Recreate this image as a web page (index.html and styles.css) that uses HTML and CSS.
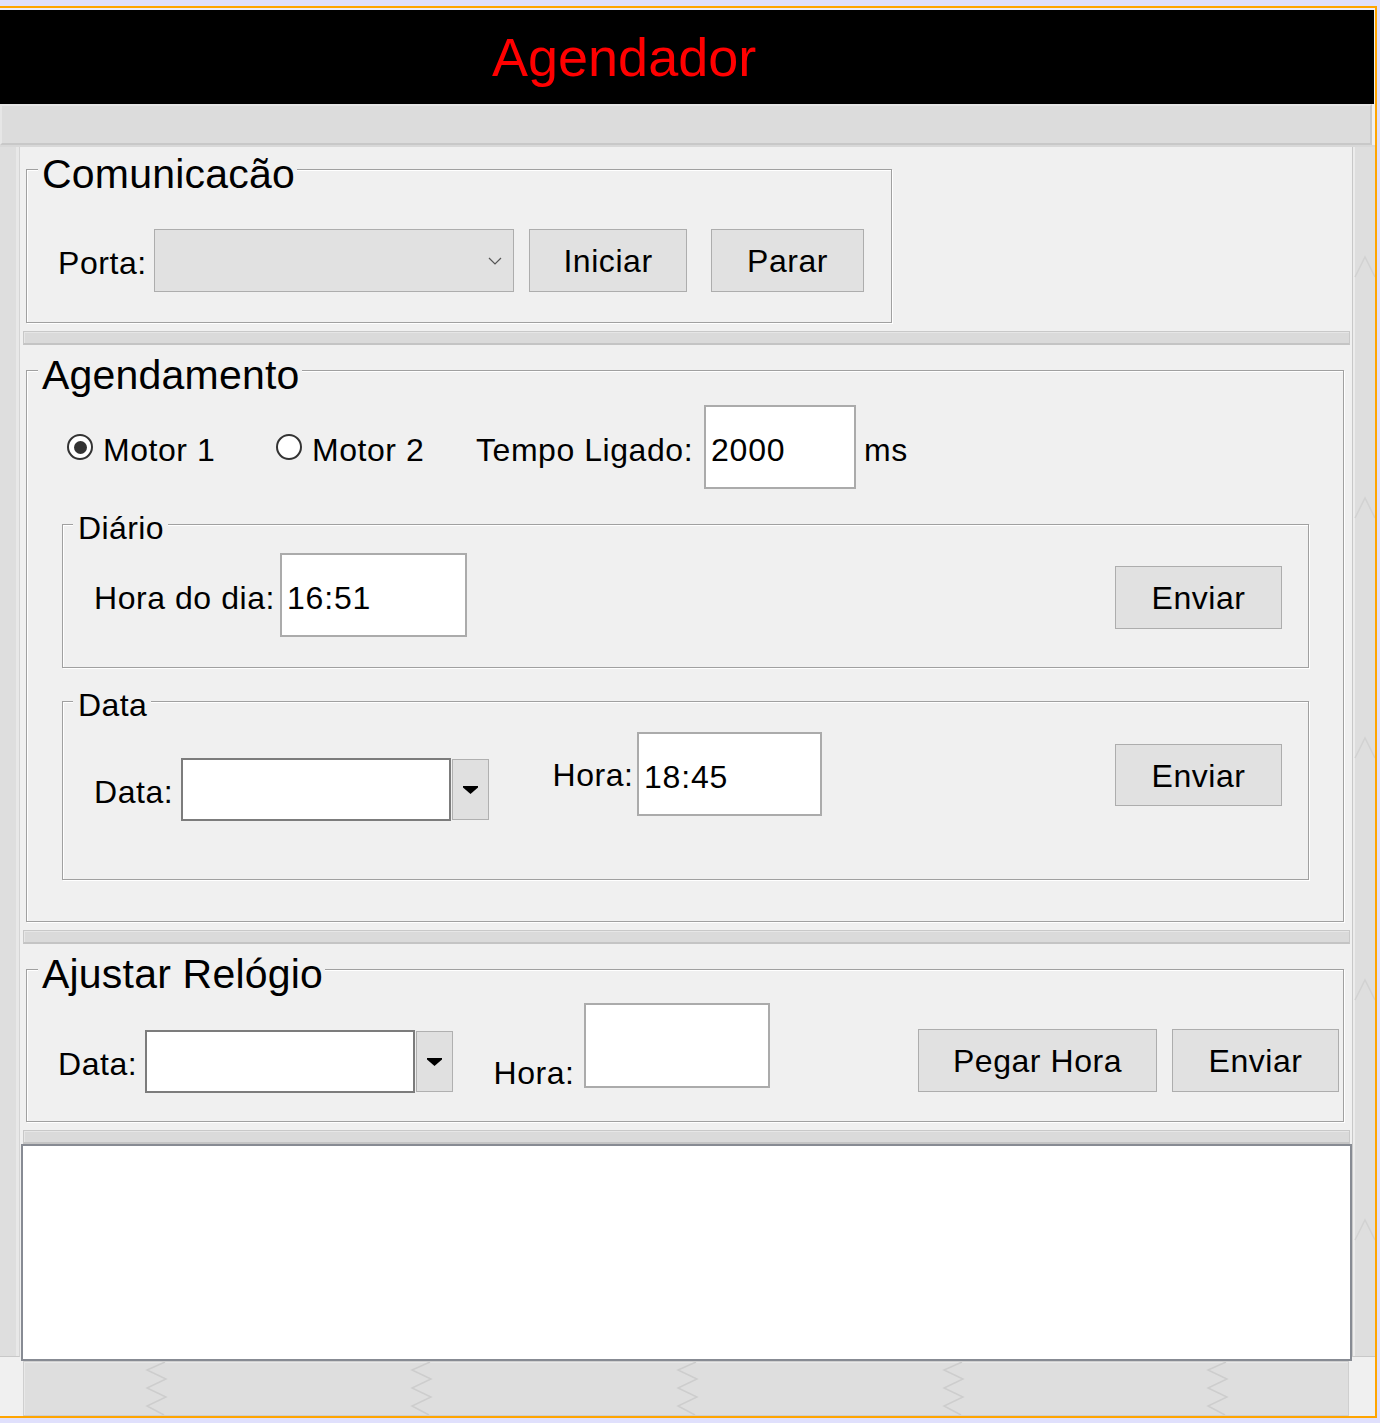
FILE: index.html
```html
<!DOCTYPE html>
<html lang="pt">
<head>
<meta charset="utf-8">
<title>Agendador</title>
<link rel="stylesheet" href="styles.css">
</head>
<body>
<div class="frame">
  <div class="topline"></div>
  <header class="header"><h1 class="app-title">Agendador</h1></header>
  <div class="toolbar"></div>
  <div class="toolbar-gap"></div>
  <div class="main">
    <div class="side side-left"></div>
    <div class="center">
      <section class="pane pane-com">
        <div class="group group-com">
          <div class="group-title">Comunicacão</div>
          <div class="row row-com">
            <span class="label label-porta">Porta:</span>
            <div class="combo"><svg class="combo-chev" width="14" height="8" viewBox="0 0 14 8"><polyline points="1,1 7,7 13,1" fill="none" stroke="#555" stroke-width="1.2"/></svg></div>
            <div class="btn btn-iniciar">Iniciar</div>
            <div class="btn btn-parar">Parar</div>
          </div>
        </div>
      </section>
      <div class="divider"></div>
      <section class="pane pane-ag">
        <div class="group group-ag">
          <div class="group-title">Agendamento</div>
          <div class="row row-motor">
            <span class="radio checked"></span><span class="label radio-label rl1">Motor 1</span>
            <span class="radio radio2"></span><span class="label radio-label rl2">Motor 2</span>
            <span class="label tempo">Tempo Ligado:</span>
            <div class="field field-tempo">2000</div>
            <span class="label ms">ms</span>
          </div>
          <div class="subgroup sg-diario">
            <div class="sub-title">Diário</div>
            <div class="row row-diario">
              <span class="label label-hd">Hora do dia:</span>
              <div class="field field-hd">16:51</div>
              <div class="btn btn-enviar">Enviar</div>
            </div>
          </div>
          <div class="subgroup sg-data">
            <div class="sub-title">Data</div>
            <div class="row row-data">
              <div class="datepick dp-ag">
                <span class="label dp-label">Data:</span>
                <div class="datefield"></div>
                <div class="dropbtn"><svg width="15" height="8" viewBox="0 0 15 8"><path d="M0 0H15V1.5L7.5 8L0 1.5Z" fill="#000"/></svg></div>
              </div>
              <span class="label hora-ag">Hora:</span>
              <div class="field field-hora">18:45</div>
              <div class="btn btn-enviar btn-enviar-data">Enviar</div>
            </div>
          </div>
        </div>
      </section>
      <div class="divider"></div>
      <section class="pane pane-rel">
        <div class="group group-rel">
          <div class="group-title">Ajustar Relógio</div>
          <div class="row row-rel">
            <div class="datepick dp-rel">
              <span class="label dp-label">Data:</span>
              <div class="datefield"></div>
              <div class="dropbtn"><svg width="15" height="8" viewBox="0 0 15 8"><path d="M0 0H15V1.5L7.5 8L0 1.5Z" fill="#000"/></svg></div>
            </div>
            <span class="label hora-rel">Hora:</span>
            <div class="field field-hora-rel"></div>
            <div class="btn btn-pegar">Pegar Hora</div>
            <div class="btn btn-enviar-rel">Enviar</div>
          </div>
        </div>
      </section>
      <div class="divider"></div>
      <div class="textarea"></div>
      <div class="bottom-strip">
        <svg width="1326" height="55" viewBox="0 0 1326 55">
          <g fill="none" stroke="#cdcdcd" stroke-width="1.5">
            <polyline points="142,1 124,9 143,18 124,27 143,36 124,45 141,54"/>
            <polyline points="407,1 389,9 408,18 389,27 408,36 389,45 406,54"/>
            <polyline points="673,1 655,9 674,18 655,27 674,36 655,45 672,54"/>
            <polyline points="939,1 921,9 940,18 921,27 940,36 921,45 938,54"/>
            <polyline points="1203,1 1185,9 1204,18 1185,27 1204,36 1185,45 1202,54"/>
          </g>
        </svg>
      </div>
    </div>
    <div class="side side-right">
      <svg width="23" height="1210" viewBox="0 0 23 1210">
        <g fill="none" stroke="#d2d2d2" stroke-width="1.5">
          <polyline points="3,130 13,110 23,130"/>
          <polyline points="3,371 13,351 23,371"/>
          <polyline points="3,611 13,591 23,611"/>
          <polyline points="3,853 13,833 23,853"/>
          <polyline points="3,1093 13,1073 23,1093"/>
        </g>
      </svg>
    </div>
  </div>
</div>
</body>
</html>
```

FILE: styles.css
```css
html, body {
  margin: 0;
  padding: 0;
}
body {
  background: #e0e0fc;
  font-family: "Liberation Sans", Arial, sans-serif;
  color: #000;
  height: 1423px;
  overflow: hidden;
}
.frame {
  margin-top: 6px;
  width: 1375px;
  border-top: 2px solid #ffa500;
  border-right: 2px solid #ffa500;
  border-bottom: 2px solid #ffa500;
  background: #f0f0f0;
}
.topline {
  height: 2px;
  background: #ececfa;
}
.header {
  height: 94px;
  background: #000;
  margin-right: 1px;
}
.app-title {
  margin: 0;
  padding-left: 492px;
  font-size: 54px;
  line-height: 94px;
  font-weight: normal;
  color: #ff0000;
}
.toolbar {
  height: 41px;
  margin-right: 3px;
  box-sizing: border-box;
  background: #dcdcdc;
  border-top: 2px solid #e6e6e6;
  border-left: 2px solid #e6e6e6;
  border-bottom: 2px solid #c8c8c8;
  border-right: 2px solid #c8c8c8;
}
.toolbar-gap {
  height: 2px;
  background: #d8d8d8;
}
.main {
  display: flex;
  height: 1269px;
}
.side {
  flex-shrink: 0;
  height: 1210px;
  box-sizing: border-box;
  background: #dedede;
}
.side-left {
  width: 20px;
  border-right: 1px solid #d4d4d4;
  border-bottom: 1px solid #c8c8c8;
  box-shadow: inset -3px 0 0 #e8e8e8;
}
.side-right {
  width: 23px;
  border-left: 1px solid #c8c8c8;
  border-bottom: 1px solid #c8c8c8;
  box-shadow: inset 2px 0 0 #ececec;
  overflow: hidden;
}
.side-right svg {
  display: block;
  margin-left: -1px;
}
.center {
  width: 1332px;
  flex-shrink: 0;
  display: flex;
  flex-direction: column;
}
.pane {
  flex-shrink: 0;
}
.pane-com { height: 184px; }
.pane-ag { height: 585px; }
.pane-rel { height: 186px; }

.divider {
  flex-shrink: 0;
  height: 14px;
  margin: 0 2px 0 3px;
  box-sizing: border-box;
  background: #dadada;
  border: 1px solid #c8c8c8;
  border-bottom: 2px solid #c4c4c4;
  box-shadow: inset 1px 1px 0 #e6e6e6;
}

/* etched titled groups */
.group, .subgroup {
  box-sizing: border-box;
  border: 1px solid #a0a0a0;
  box-shadow: inset 1px 1px 0 #fff, 1px 1px 0 #fff;
}
.group {
  margin-left: 6px;
  margin-top: 25px;
}
.group-com {
  margin-top: 22px;
  width: 866px;
  height: 154px;
}
.group-ag {
  width: 1318px;
  height: 552px;
}
.group-rel {
  width: 1318px;
  height: 153px;
}
.group-title {
  width: fit-content;
  margin: -19px 0 0 11px;
  padding: 0 2px 0 4px;
  background: #f0f0f0;
  font-size: 41px;
  line-height: 46px;
  letter-spacing: 0.2px;
  white-space: nowrap;
}
.subgroup {
  margin-left: 35px;
  width: 1247px;
}
.sg-diario {
  margin-top: 35px;
  height: 144px;
}
.sg-data {
  margin-top: 33px;
  height: 179px;
}
.sub-title {
  width: fit-content;
  margin: -15px 0 0 10px;
  padding: 0 4px 0 5px;
  background: #f0f0f0;
  font-size: 32px;
  line-height: 37px;
  letter-spacing: 0.4px;
  white-space: nowrap;
}

/* rows */
.row {
  display: flex;
}
.row-com {
  align-items: center;
  height: 63px;
  margin-top: 32px;
}
.row-motor {
  align-items: center;
  height: 84px;
  margin-top: 7px;
}
.row-diario {
  align-items: center;
  height: 84px;
  margin-top: 6px;
}
.row-data {
  align-items: flex-start;
  height: 84px;
  margin-top: 8px;
}
.row-rel {
  align-items: flex-start;
  height: 88px;
  margin-top: 6px;
}

.label {
  flex-shrink: 0;
  box-sizing: border-box;
  font-size: 32px;
  line-height: 37px;
  padding-top: 6px;
  letter-spacing: 0.55px;
  white-space: nowrap;
}
.label-porta { margin-left: 31px; width: 96px; }
.rl1 { margin-left: 10px; width: 173px; }
.rl2 { margin-left: 10px; width: 164px; }
.tempo { width: 228px; }
.ms { margin-left: 8px; }
.label-hd { margin-left: 31px; width: 186px; }
.dp-label { margin-left: 31px; width: 87px; }
.hora-ag {
  margin-left: 63.5px;
  width: 84.5px;
  margin-top: 19px;
}
.hora-rel {
  margin-left: 40.5px;
  width: 90.5px;
  margin-top: 46px;
}

/* radios */
.radio {
  flex-shrink: 0;
  width: 26px;
  height: 26px;
  box-sizing: border-box;
  border: 2px solid #333;
  border-radius: 50%;
  background: #fff;
  display: flex;
  align-items: center;
  justify-content: center;
  margin-left: 40px;
}
.radio.checked::after {
  content: "";
  width: 13px;
  height: 13px;
  border-radius: 50%;
  background: #333;
}
.radio2 { margin-left: 0; }

/* combo */
.combo {
  flex-shrink: 0;
  width: 360px;
  height: 63px;
  box-sizing: border-box;
  background: #e1e1e1;
  border: 1px solid #adadad;
  display: flex;
  align-items: center;
  justify-content: flex-end;
  padding-right: 11px;
}
.combo-chev { display: block; }

/* buttons */
.btn {
  flex-shrink: 0;
  height: 63px;
  box-sizing: border-box;
  background: #e1e1e1;
  border: 1px solid #adadad;
  display: flex;
  align-items: center;
  justify-content: center;
  padding-top: 2px;
  font-size: 32px;
  line-height: 37px;
  letter-spacing: 0.55px;
  white-space: nowrap;
}
.btn-iniciar { width: 158px; margin-left: 15px; }
.btn-parar { width: 153px; margin-left: 24px; }
.btn-enviar {
  width: 167px;
  margin-left: auto;
  margin-right: 26px;
  margin-top: 5px;
}
.btn-enviar-data {
  margin-top: 12px;
  height: 62px;
}
.btn-pegar {
  width: 239px;
  margin-left: auto;
  margin-top: 26px;
}
.btn-enviar-rel {
  width: 167px;
  margin-left: 15px;
  margin-right: 4px;
  margin-top: 26px;
}

/* text fields */
.field {
  flex-shrink: 0;
  height: 84px;
  box-sizing: border-box;
  background: #fff;
  border: 2px solid #ababab;
  display: flex;
  align-items: center;
  padding: 6px 0 0 5px;
  font-size: 32px;
  line-height: 37px;
  letter-spacing: 0.8px;
  white-space: nowrap;
}
.field-tempo { width: 152px; }
.field-hd { width: 187px; }
.field-hora { width: 185px; }
.field-hora-rel { width: 186px; height: 85px; }

/* date pickers */
.datepick {
  flex-shrink: 0;
  display: flex;
  align-items: center;
  height: 63px;
}
.dp-ag { margin-top: 26px; }
.dp-rel { margin-top: 27px; }
.datefield {
  flex-shrink: 0;
  width: 270px;
  height: 63px;
  box-sizing: border-box;
  background: #fff;
  border: 2px solid #7c7c7c;
}
.dropbtn {
  flex-shrink: 0;
  width: 37px;
  height: 61px;
  margin-left: 1px;
  box-sizing: border-box;
  background: #e0e0e0;
  border: 1px solid #b0b0b0;
  display: flex;
  align-items: center;
  justify-content: center;
}
.dropbtn svg { display: block; }

/* log area */
.textarea {
  flex-shrink: 0;
  width: 1331px;
  height: 217px;
  margin-left: 1px;
  box-sizing: border-box;
  background: #fff;
  border: 2px solid #878b93;
}
.bottom-strip {
  flex-shrink: 0;
  height: 55px;
  margin: 0 3px;
  box-sizing: border-box;
  background: #dedede;
  border: 1px solid #cfcfcf;
  box-shadow: inset 1px 1px 0 #e8e8e8;
  overflow: hidden;
}
.bottom-strip svg {
  display: block;
  margin: -1px 0 0 -1px;
}
```
